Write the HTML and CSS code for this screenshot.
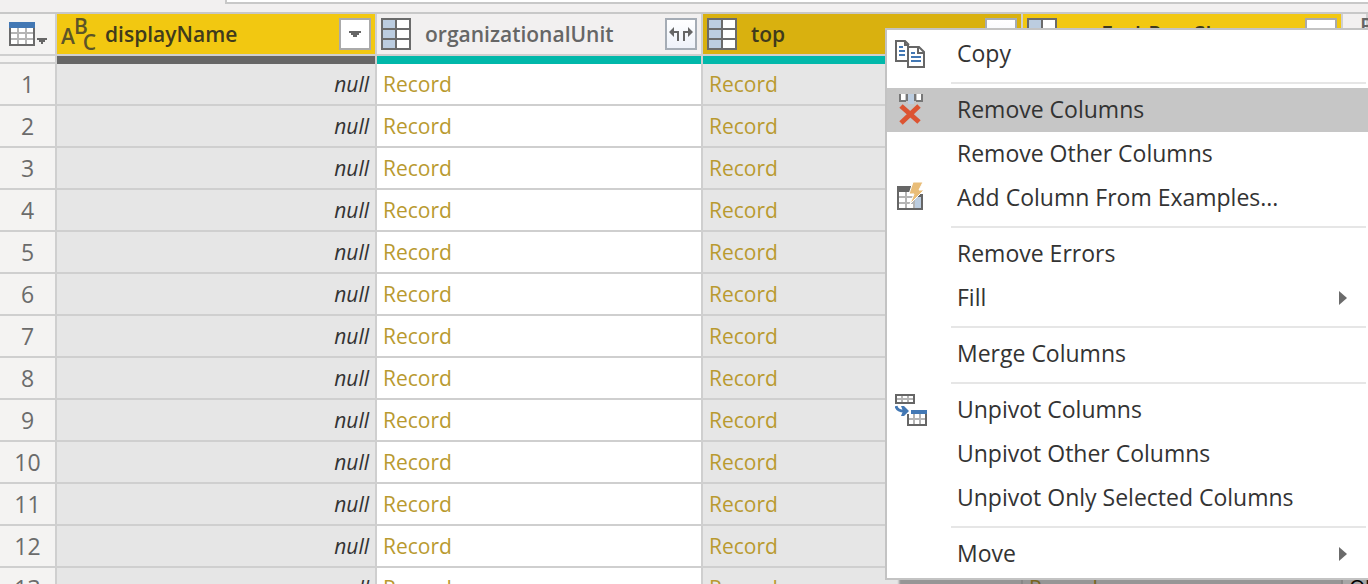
FILE: index.html
```html
<!DOCTYPE html>
<html lang="en">
<head>
<meta charset="utf-8">
<title>Query editor</title>
<link rel="stylesheet" href="styles.css">
<script src="grid.js" defer></script>
</head>
<body>
<svg class="defs" aria-hidden="true">
  <symbol id="record" viewBox="0 0 30 32" shape-rendering="crispEdges">
    <path fill="#6b6b6b" d="M0 0h30v32H0z"/>
    <path fill="#bccde0" d="M2 2h12v8H2zm0 10h12v8H2zm0 10h12v8H2z"/>
    <path fill="#fff" d="M16 2h12v8H16zm0 10h12v8H16zm0 10h12v8H16z"/>
  </symbol>
</svg>
<div class="editor">
  <div class="formula-bar"><input class="formula" type="text" aria-label="Formula"></div>
  <table class="grid">
    <colgroup>
      <col class="w-index"><col class="w-col"><col class="w-wide"><col class="w-col"><col class="w-col"><col>
    </colgroup>
    <thead>
      <tr class="head">
        <th class="corner">
          <button class="table-menu" type="button" aria-label="Table options">
            <svg width="38" height="24" viewBox="0 0 38 24" shape-rendering="crispEdges"><path fill="#6b6b6b" d="M0 6h26v18H0z"/><path fill="#4378b4" d="M0 0h26v6H0z"/><path fill="#b5b5b5" d="M2 6h22v16H2z"/><path fill="#fff" d="M2 6h6v4H2zm8 0h6v4h-6zm8 0h6v4h-6zM2 12h6v4H2zm8 0h6v4h-6zm8 0h6v4h-6zM2 18h6v4H2zm8 0h6v4h-6zm8 0h6v4h-6z"/><path fill="#666" d="M28 16h10v2h-2v2h-2v2h-2v-2h-2v-2h-2z"/></svg>
          </button>
        </th>
        <th class="selected"><div class="head-cell">
          <span class="type-text"><span class="base">A</span><span class="up">B</span><span class="down">C</span></span>
          <span class="name">displayName</span>
          <button class="filter" type="button" aria-label="Filter displayName"><svg width="12" height="6" viewBox="0 0 12 6" shape-rendering="crispEdges"><path fill="#666" d="M0 0h12v2h-2v2H8v2H4V4H2V2H0z"/></svg></button>
        </div></th>
        <th><div class="head-cell">
          <svg class="type" width="30" height="32"><use href="#record"/></svg>
          <span class="name">organizationalUnit</span>
          <button class="filter expand" type="button" aria-label="Expand organizationalUnit"><svg width="24" height="14" viewBox="0 0 24 14"><path d="M9 14V5H4M15 14V5h5" fill="none" stroke="#666" stroke-width="2"/><path fill="#666" d="M0 5l5-5v10zM24 5l-5-5v10z"/></svg></button>
        </div></th>
        <th class="selected current"><div class="head-cell">
          <svg class="type" width="30" height="32"><use href="#record"/></svg>
          <span class="name">top</span>
          <button class="filter expand" type="button" aria-label="Expand top"></button>
        </div></th>
        <th class="selected"><div class="head-cell">
          <svg class="type" width="30" height="32"><use href="#record"/></svg>
          <span class="name">msExchPassSk</span>
          <button class="filter" type="button" aria-label="Filter"></button>
        </div></th>
        <th><div class="head-cell"><span class="type-text"><span class="base">A</span><span class="up">B</span></span></div></th>
      </tr>
      <tr class="quality"><td class="corner"></td><td class="empty"></td><td></td><td></td><td></td><td></td></tr>
    </thead>
    <tbody id="rows"></tbody>
  </table>
  <div class="menu" role="menu">
    <button type="button" role="menuitem"><svg width="32" height="28" viewBox="0 0 32 28"><g fill="#fff" stroke="#666" stroke-width="2"><path d="M12 21H1V1h9l4 4"/><path d="M13 7h11l5 5v15H13z"/><path d="M23 7v6h6M10 1v4h4" fill="none"/></g><path stroke="#4378b4" stroke-width="2" d="M4 7h4M4 11h6M4 15h6M16 13h4M16 17h10M16 21h10"/></svg>Copy</button>
    <hr>
    <button class="active" type="button" role="menuitem"><svg width="32" height="32" viewBox="0 0 32 32"><path fill="#fff" d="M6 0h4v6H6zm16 0h4v6h-4z"/><path fill="#bccde0" d="M13 0h6v10h-6z"/><path d="M5 0v7h6M27 0v7h-6M12 0v7M20 0v7" fill="none" stroke="#777" stroke-width="2"/><path stroke="#dc5432" stroke-width="5" d="M6 12l18 16M24 12L6 29"/></svg>Remove Columns</button>
    <button type="button" role="menuitem"><i></i>Remove Other Columns</button>
    <button type="button" role="menuitem"><svg width="32" height="32" viewBox="0 0 32 32"><path fill="#666" d="M2 4h26v24H2z"/><path fill="#b5b5b5" d="M4 10h16v16H4z"/><path fill="#fff" d="M4 10h6v4H4zm8 0h6v4h-6zM4 16h6v4H4zm8 0h6v4h-6zM4 22h6v4H4zm8 0h6v4h-6zM17 4h12v8H17z"/><path fill="#bccde0" d="M20 15h6v11h-6z"/><path fill="#e9bd78" stroke="#fff" d="M18 0h10l-4 8h5L15 22l4-10h-5z"/></svg>Add Column From Examples...</button>
    <hr>
    <button type="button" role="menuitem"><i></i>Remove Errors</button>
    <button class="sub" type="button" role="menuitem" aria-haspopup="true"><i></i>Fill</button>
    <hr>
    <button type="button" role="menuitem"><i></i>Merge Columns</button>
    <hr>
    <button type="button" role="menuitem"><svg width="32" height="32" viewBox="0 0 32 32" shape-rendering="crispEdges"><path fill="#666" d="M0 0h20v10H0zM12 20h20v12H12z"/><path fill="#b5b5b5" d="M2 2h16v6H2zM14 20h16v10H14z"/><path fill="#fff" d="M2 2h4v2H2zm6 0h4v2H8zm6 0h4v2h-4zM2 6h4v2H2zm6 0h4v2H8zm6 0h4v2h-4zM14 20h4v4h-4zm6 0h4v4h-4zm6 0h4v4h-4zM14 26h4v4h-4zm6 0h4v4h-4zm6 0h4v4h-4z"/><path fill="#4378b4" d="M16 16h16v4H16z"/><g shape-rendering="auto"><path fill="none" stroke="#4378b4" stroke-width="3" d="M1 12c1 4 4 5 8 5"/><path fill="#4378b4" d="M6 12h3l5 5-5 5H6l2-5z"/></g></svg>Unpivot Columns</button>
    <button type="button" role="menuitem"><i></i>Unpivot Other Columns</button>
    <button type="button" role="menuitem"><i></i>Unpivot Only Selected Columns</button>
    <hr>
    <button class="sub" type="button" role="menuitem" aria-haspopup="true"><i></i>Move</button>
  </div>
</div>
</body>
</html>
```
FILE: styles.css
```css
* { box-sizing: border-box; }
body {
  margin: 0;
  overflow: hidden;
  background: #f2f0f0;
  font-family: "Open Sans", "Noto Sans", sans-serif;
}
button { font: inherit; color: inherit; cursor: default; }
.defs { position: absolute; width: 0; height: 0; }
.editor { position: relative; height: 100vh; overflow: hidden; }
.formula-bar { height: 12px; padding-left: 225px; }
.formula {
  display: block;
  width: 100%;
  height: 4px;
  padding: 0;
  border: solid #c8c8c8;
  border-width: 0 0 2px 2px;
  background: #fff;
}

.grid {
  width: 100%;
  table-layout: fixed;
  border-collapse: separate;
  border-spacing: 0;
  border-top: 2px solid #c8c8c8;
}
.w-index { width: 57px; }
.w-col { width: 320px; }
.w-wide { width: 326px; }
.grid th, .grid td {
  padding: 0;
  border: solid #cfcfcf;
  border-width: 0 2px 2px 0;
}
.head { height: 42px; }
.grid th.selected { background: #f2c811; }
.grid th.current { background: #d9b10f; }
.corner { text-align: left; background: #f4f3f2; }
.table-menu { display: block; border: 0; padding: 0 0 0 9px; background: none; }
.table-menu svg { display: block; }
.head-cell {
  display: flex;
  align-items: center;
  height: 40px;
  padding: 0 4px;
  font-size: 21px;
  font-weight: 600;
  line-height: 40px;
  color: #666;
}
.selected .head-cell { color: #403a1c; }
.name { flex: 1; margin-left: 14px; text-align: left; }
.type { flex: none; }
.type-text {
  display: flex;
  width: 30px;
}
.selected .type-text { color: #5c5428; }
.type-text .base { transform: translateY(2px); }
.type-text .up { margin-left: -1px; transform: translateY(-8px); }
.type-text .down { margin-left: -5px; transform: translateY(8px); }
.filter {
  display: grid;
  place-items: center;
  width: 32px;
  height: 32px;
  padding: 0;
  border: 2px solid #aaa;
  background: #fff;
}
.expand { border-color: #a5acb5; background: linear-gradient(#fff, #eef2fa); }

.quality { height: 8px; }
.grid .quality td { height: 8px; border-bottom: 0; background: #01b8aa; }
.grid .quality td.empty { background: #666; }
.grid .quality td.corner { border-bottom: 2px solid #cfcfcf; background: #f4f3f2; }

.row { height: 42px; font-size: 21px; line-height: 40px; }
.row th {
  font-size: 23px;
  font-weight: 400;
  text-align: center;
  color: #6b6b6b;
  background: #f4f3f2;
}
.row td { background: #fff; }
.row td.picked { background: #e6e6e6; }
.grid .row td.null { padding-right: 6px; text-align: right; font-style: italic; color: #333; }
.grid .row td.rec { padding-left: 6px; }
.row a { color: #b99a2f; text-decoration: none; }

.menu {
  position: absolute;
  top: 28px;
  left: 885px;
  right: 0;
  padding: 2px 0;
  border: 2px solid #c3c3c3;
  border-right: 0;
  background: #fff;
  box-shadow: 14px 10px 2px rgba(0, 0, 0, 0.35);
}
.menu button {
  display: flex;
  align-items: center;
  gap: 30px;
  width: 100%;
  height: 44px;
  padding: 0 21px 2px 8px;
  border: 0;
  background: none;
  font-size: 23px;
  line-height: 40px;
  color: #333;
  white-space: nowrap;
}
.menu .active { background: #c6c6c6; }
.menu button svg, .menu i { flex: none; width: 32px; margin-top: 2px; }
.menu hr { height: 2px; margin: 6px 2px 4px 64px; border: 0; background: #e6e6e6; }
.sub::after {
  content: "";
  margin: 2px 0 0 auto;
  border: solid transparent;
  border-width: 7px 0 7px 8px;
  border-left-color: #6b6b6b;
}
```
FILE: grid.js
```js
const body = document.getElementById("rows");
const link = '<a href="#">Record</a>';
const rowCount = 13;
for (let n = 1; n <= rowCount; n++) {
  const last = n === rowCount;
  body.insertAdjacentHTML("beforeend",
    `<tr class="row"><th scope="row">${n}</th><td class="picked null">null</td>` +
    `<td class="rec">${link}</td><td class="rec picked">${link}</td>` +
    `<td class="rec picked">${last ? link : ""}</td><td class="rec">${last ? "OU" : ""}</td></tr>`);
}
```
